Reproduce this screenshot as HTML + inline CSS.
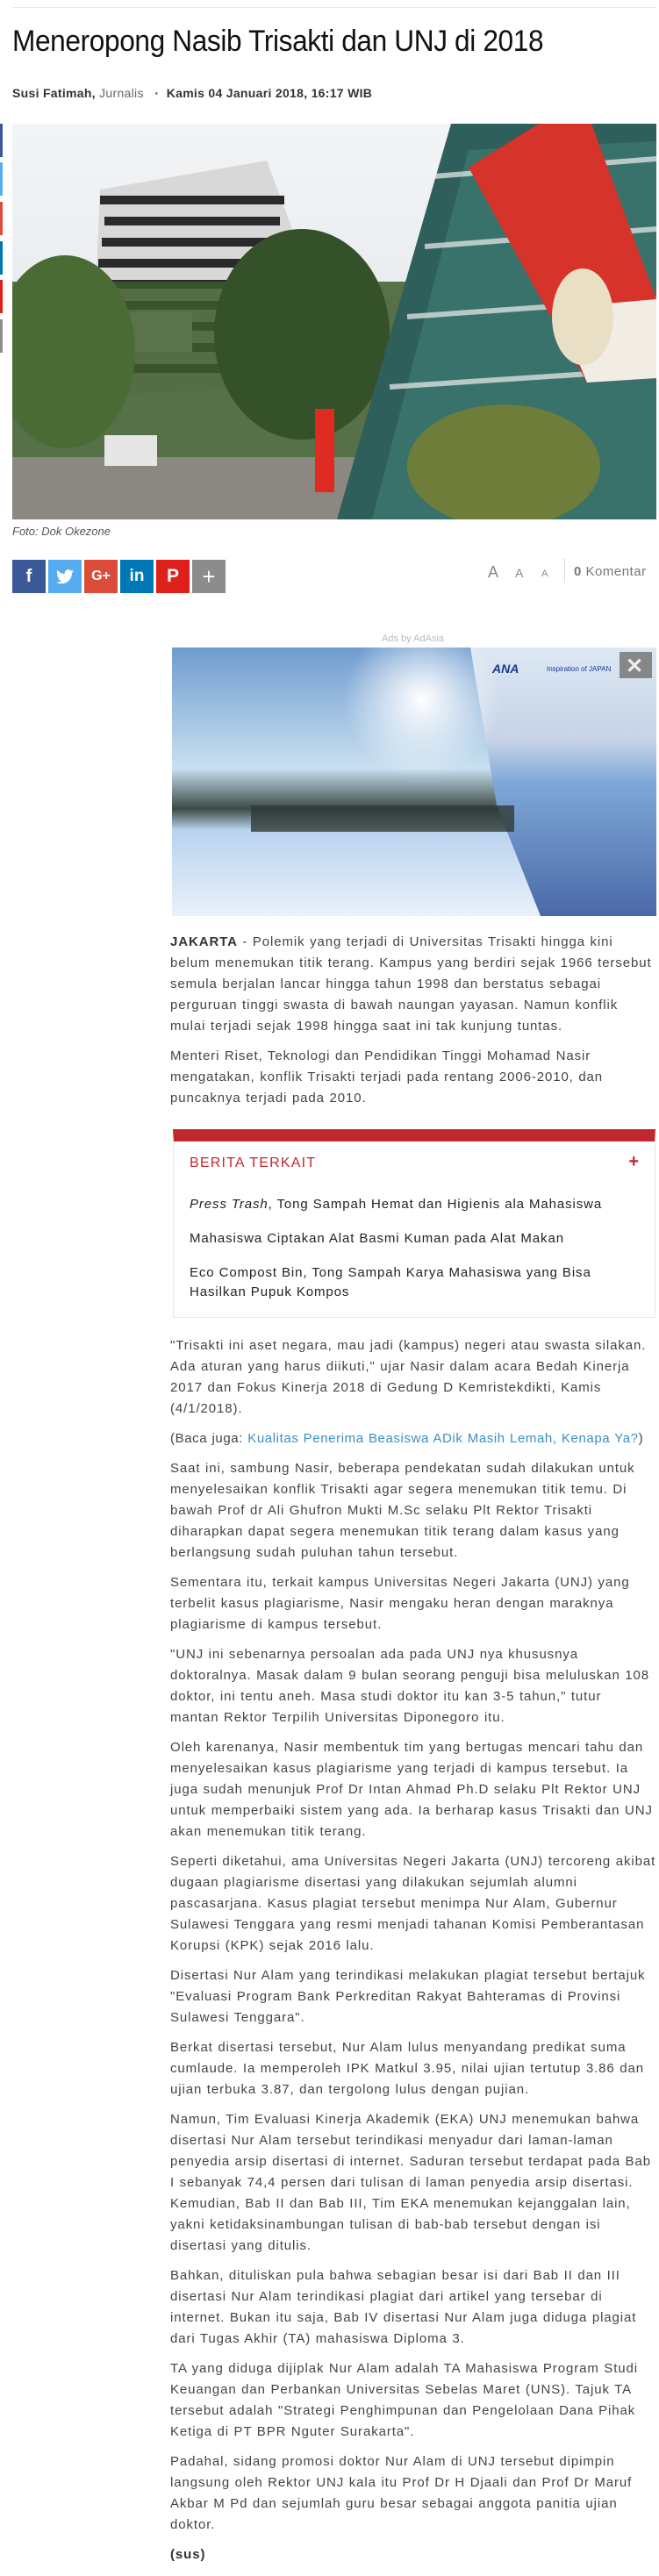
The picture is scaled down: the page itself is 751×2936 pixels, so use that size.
<!DOCTYPE html>
<html><head><meta charset="utf-8"><style>
*{margin:0;padding:0;box-sizing:border-box}
body{width:751px;height:2936px;background:#fff;font-family:"Liberation Sans",sans-serif;position:relative;overflow:hidden;color:#444}
.abs{position:absolute}
.topline{left:14px;top:8px;width:734px;height:1px;background:#e6e6e6}
h1{position:absolute;left:14px;top:28px;font-size:34px;font-weight:normal;color:#111;letter-spacing:-0.4px;transform:scaleX(0.93);transform-origin:left}
.meta{left:14px;top:98px;font-size:14px;color:#333;font-weight:bold;letter-spacing:0.3px}
.meta .j{color:#666;font-weight:normal}
.photo{left:14px;top:141px;width:734px;height:451px;overflow:hidden}
.cap{left:14px;top:598px;font-size:13px;font-style:italic;color:#555}
.sb{position:absolute;top:638px;width:38px;height:38px;color:#fff;font-weight:bold;font-size:20px;text-align:center;line-height:38px}
.fs{top:642px;color:#888;font-size:18px}
.side{left:0;width:3px;height:38px}
.adl{left:0;width:751px;top:722px;text-align:center;font-size:11px;color:#bbb;padding-left:190px}
.ad{left:196px;top:738px;width:552px;height:306px;overflow:hidden}
.txt{position:absolute;left:194px;width:556px;font-size:15px;line-height:24px;color:#444;letter-spacing:0.9px;word-spacing:0.5px}
.txt p{margin-bottom:10px}
.box{left:197px;top:1287px;width:550px;height:215px;border:1px solid #e8e8e8;border-top:14px solid #c1272d}
.box .t{position:absolute;left:18px;top:16px;color:#c1272d;font-size:16px;letter-spacing:1.2px}
.box .pl{position:absolute;right:18px;top:12px;color:#c1272d;font-size:20px;font-weight:bold}
.box .i{position:absolute;left:18px;font-size:15px;color:#222;letter-spacing:0.9px;line-height:22px;width:510px}
a{color:#3a8fc4;text-decoration:none}
</style></head><body>
<div class="abs topline"></div>
<h1>Meneropong Nasib Trisakti dan UNJ di 2018</h1>
<div class="abs meta">Susi Fatimah, <span class="j">Jurnalis</span> &nbsp;&nbsp;·&nbsp; Kamis 04 Januari 2018, 16:17 WIB</div>

<div class="abs side" style="top:141px;background:#3b5998"></div>
<div class="abs side" style="top:185px;background:#55acee"></div>
<div class="abs side" style="top:230px;background:#dd4b39"></div>
<div class="abs side" style="top:275px;background:#0077b5"></div>
<div class="abs side" style="top:319px;background:#e0201b"></div>
<div class="abs side" style="top:364px;background:#8c8c8c"></div>

<div class="abs photo">
<svg width="734" height="451" viewBox="0 0 734 451">
<defs><linearGradient id="sky" x1="0" y1="0" x2="0" y2="1"><stop offset="0" stop-color="#f2f4f6"/><stop offset="1" stop-color="#dfe3e6"/></linearGradient></defs>
<rect width="734" height="451" fill="url(#sky)"/>
<polygon points="100,75 290,42 330,150 320,300 90,310" fill="#d8d8d8"/>
<g fill="#2a2a2a">
<rect x="100" y="82" width="210" height="10"/><rect x="105" y="106" width="200" height="10"/><rect x="102" y="130" width="205" height="10"/><rect x="98" y="154" width="210" height="10"/><rect x="95" y="178" width="215" height="10"/><rect x="93" y="202" width="215" height="10"/><rect x="92" y="226" width="215" height="10"/><rect x="92" y="250" width="215" height="10"/><rect x="94" y="274" width="210" height="10"/>
</g>
<rect x="123" y="215" width="82" height="45" fill="#fff"/>
<rect x="0" y="180" width="450" height="240" fill="#3d5a2a" opacity="0.85"/>
<ellipse cx="60" cy="260" rx="80" ry="110" fill="#4a6b34"/>
<ellipse cx="330" cy="240" rx="100" ry="120" fill="#35512a"/>
<rect x="0" y="380" width="420" height="71" fill="#8a8880"/>
<rect x="105" y="355" width="60" height="35" fill="#e6e6e6"/>
<polygon points="370,451 500,0 734,0 734,451" fill="#2f5f5a"/>
<polygon points="410,451 520,30 734,20 734,451" fill="#3d7a72" opacity="0.7"/>
<g stroke="#eee" stroke-width="6" opacity="0.7"><line x1="480" y1="60" x2="734" y2="40"/><line x1="470" y1="140" x2="734" y2="120"/><line x1="450" y1="220" x2="734" y2="200"/><line x1="430" y1="300" x2="734" y2="280"/></g>
<polygon points="520,50 600,0 660,0 734,200 734,290 655,295" fill="#d6332b"/>
<polygon points="655,295 620,210 734,200 734,290" fill="#f2ede4"/>
<ellipse cx="650" cy="220" rx="35" ry="55" fill="#e9dfc4"/>
<ellipse cx="560" cy="390" rx="110" ry="70" fill="#6f7d3a"/>
<rect x="345" y="325" width="22" height="95" fill="#e02b22"/>
</svg>
</div>
<div class="abs cap">Foto: Dok Okezone</div>

<div class="sb" style="left:14px;background:#3b5998">f</div>
<div class="sb" style="left:55px;background:#55acee">
<svg width="20" height="17" viewBox="0 0 24 20" style="margin-top:11px"><path fill="#fff" d="M24 2.4a10 10 0 0 1-2.8.8A4.9 4.9 0 0 0 23.3.4a9.8 9.8 0 0 1-3.1 1.2A4.9 4.9 0 0 0 11.8 6 14 14 0 0 1 1.7.9a4.9 4.9 0 0 0 1.5 6.6 4.9 4.9 0 0 1-2.2-.6 4.9 4.9 0 0 0 3.9 4.8 4.9 4.9 0 0 1-2.2.1 4.9 4.9 0 0 0 4.6 3.4A9.9 9.9 0 0 1 0 17.2 14 14 0 0 0 7.5 19.4c9.1 0 14-7.5 14-14v-.6A10 10 0 0 0 24 2.4z"/></svg></div>
<div class="sb" style="left:96px;background:#dd4b39;font-size:16px">G+</div>
<div class="sb" style="left:137px;background:#0077b5;font-size:19px">in</div>
<div class="sb" style="left:178px;background:#e0201b;font-size:21px">P</div>
<div class="sb" style="left:219px;background:#8c8c8c;font-size:26px;font-weight:normal">+</div>

<div class="abs fs" style="left:556px;font-size:18px">A</div>
<div class="abs fs" style="left:587px;top:645px;font-size:14px">A</div>
<div class="abs fs" style="left:617px;top:648px;font-size:11px">A</div>
<div class="abs" style="left:643px;top:636px;width:1px;height:28px;background:#ddd"></div>
<div class="abs" style="left:654px;top:643px;font-size:15px;color:#777;letter-spacing:0.5px"><b>0</b> Komentar</div>

<div class="abs adl">Ads by AdAsia</div>
<div class="abs ad">
<svg width="552" height="306">
<defs>
<linearGradient id="a1" x1="0" y1="0" x2="0" y2="1"><stop offset="0" stop-color="#6f9ccf"/><stop offset="0.45" stop-color="#c9e0f0"/><stop offset="0.6" stop-color="#3b4a45"/><stop offset="0.68" stop-color="#b9d3ef"/><stop offset="1" stop-color="#e9f1fa"/></linearGradient>
<linearGradient id="a2" x1="0" y1="0" x2="0" y2="1"><stop offset="0" stop-color="#dce8f3"/><stop offset="0.35" stop-color="#c7d3e6"/><stop offset="0.5" stop-color="#7fa8d8"/><stop offset="1" stop-color="#4b69a8"/></linearGradient>
<radialGradient id="sun" cx="0.5" cy="0.5" r="0.5"><stop offset="0" stop-color="#fff"/><stop offset="1" stop-color="#fff" stop-opacity="0"/></radialGradient>
</defs>
<rect width="552" height="306" fill="url(#a1)"/>
<polygon points="340,0 552,0 552,306 420,306 370,180" fill="url(#a2)"/>
<circle cx="285" cy="60" r="90" fill="url(#sun)"/>
<rect x="90" y="180" width="300" height="30" fill="#2e3a36" opacity="0.8"/>
<text x="365" y="29" font-family="Liberation Sans" font-style="italic" font-weight="bold" font-size="14" fill="#1a3a8f">ANA</text>
<text x="427" y="27" font-family="Liberation Sans" font-size="8" fill="#1a3a8f">Inspiration of JAPAN</text>
<rect x="510" y="5" width="37" height="30" fill="#777" opacity="0.85"/>
<text x="517" y="29" font-family="Liberation Sans" font-size="24" font-weight="bold" fill="#eee">✕</text>
</svg>
</div>

<div class="txt" style="top:1062px">
<p><b style="color:#333">JAKARTA</b> - Polemik yang terjadi di Universitas Trisakti hingga kini<br>belum menemukan titik terang. Kampus yang berdiri sejak 1966 tersebut semula berjalan lancar hingga tahun 1998 dan berstatus sebagai perguruan tinggi swasta di bawah naungan yayasan. Namun konflik mulai terjadi sejak 1998 hingga saat ini tak kunjung tuntas.</p>
<p>Menteri Riset, Teknologi dan Pendidikan Tinggi Mohamad Nasir mengatakan, konflik Trisakti terjadi pada rentang 2006-2010, dan puncaknya terjadi pada 2010.</p>
</div>

<div class="abs box">
<div class="t">BERITA TERKAIT</div><div class="pl">+</div>
<div class="i" style="top:61px"><i>Press Trash</i>, Tong Sampah Hemat dan Higienis ala Mahasiswa</div>
<div class="i" style="top:100px">Mahasiswa Ciptakan Alat Basmi Kuman pada Alat Makan</div>
<div class="i" style="top:139px">Eco Compost Bin, Tong Sampah Karya Mahasiswa yang Bisa Hasilkan Pupuk Kompos</div>
</div>

<div class="txt" style="top:1522px">
<p>"Trisakti ini aset negara, mau jadi (kampus) negeri atau swasta silakan. Ada aturan yang harus diikuti," ujar Nasir dalam acara Bedah Kinerja 2017 dan Fokus Kinerja 2018 di Gedung D Kemristekdikti, Kamis (4/1/2018).</p>
<p style="white-space:nowrap;letter-spacing:0.6px">(Baca juga: <a>Kualitas Penerima Beasiswa ADik Masih Lemah, Kenapa Ya?</a>)</p>
<p>Saat ini, sambung Nasir, beberapa pendekatan sudah dilakukan untuk menyelesaikan konflik Trisakti agar segera menemukan titik temu. Di bawah Prof dr Ali Ghufron Mukti M.Sc selaku Plt Rektor Trisakti diharapkan dapat segera menemukan titik terang dalam kasus yang berlangsung sudah puluhan tahun tersebut.</p>
<p>Sementara itu, terkait kampus Universitas Negeri Jakarta (UNJ) yang terbelit kasus plagiarisme, Nasir mengaku heran dengan maraknya plagiarisme di kampus tersebut.</p>
<p>"UNJ ini sebenarnya persoalan ada pada UNJ nya khususnya doktoralnya. Masak dalam 9 bulan seorang penguji bisa meluluskan 108 doktor, ini tentu aneh. Masa studi doktor itu kan 3-5 tahun," tutur<br>mantan Rektor Terpilih Universitas Diponegoro itu.</p>
<p>Oleh karenanya, Nasir membentuk tim yang bertugas mencari tahu dan menyelesaikan kasus plagiarisme yang terjadi di kampus tersebut. Ia juga sudah menunjuk Prof Dr Intan Ahmad Ph.D selaku Plt Rektor UNJ untuk memperbaiki sistem yang ada. Ia berharap kasus Trisakti dan UNJ akan menemukan titik terang.</p>
<p>Seperti diketahui, ama Universitas Negeri Jakarta (UNJ) tercoreng akibat dugaan plagiarisme disertasi yang dilakukan sejumlah alumni pascasarjana. Kasus plagiat tersebut menimpa Nur Alam, Gubernur Sulawesi Tenggara yang resmi menjadi tahanan Komisi Pemberantasan Korupsi (KPK) sejak 2016 lalu.</p>
<p>Disertasi Nur Alam yang terindikasi melakukan plagiat tersebut bertajuk "Evaluasi Program Bank Perkreditan Rakyat Bahteramas di Provinsi Sulawesi Tenggara".</p>
<p>Berkat disertasi tersebut, Nur Alam lulus menyandang predikat suma cumlaude. Ia memperoleh IPK Matkul 3.95, nilai ujian tertutup 3.86 dan ujian terbuka 3.87, dan tergolong lulus dengan pujian.</p>
<p>Namun, Tim Evaluasi Kinerja Akademik (EKA) UNJ menemukan bahwa disertasi Nur Alam tersebut terindikasi menyadur dari laman-laman penyedia arsip disertasi di internet. Saduran tersebut terdapat pada Bab I sebanyak 74,4 persen dari tulisan di laman penyedia arsip disertasi. Kemudian, Bab II dan Bab III, Tim EKA menemukan kejanggalan lain, yakni ketidaksinambungan tulisan di bab-bab tersebut dengan isi disertasi yang ditulis.</p>
<p>Bahkan, dituliskan pula bahwa sebagian besar isi dari Bab II dan III disertasi Nur Alam terindikasi plagiat dari artikel yang tersebar di internet. Bukan itu saja, Bab IV disertasi Nur Alam juga diduga plagiat dari Tugas Akhir (TA) mahasiswa Diploma 3.</p>
<p>TA yang diduga dijiplak Nur Alam adalah TA Mahasiswa Program Studi Keuangan dan Perbankan Universitas Sebelas Maret (UNS). Tajuk TA tersebut adalah "Strategi Penghimpunan dan Pengelolaan Dana Pihak Ketiga di PT BPR Nguter Surakarta".</p>
<p>Padahal, sidang promosi doktor Nur Alam di UNJ tersebut dipimpin langsung oleh Rektor UNJ kala itu Prof Dr H Djaali dan Prof Dr Maruf Akbar M Pd dan sejumlah guru besar sebagai anggota panitia ujian doktor.</p>
<p><b style="color:#333">(sus)</b></p>
</div>
</body></html>
